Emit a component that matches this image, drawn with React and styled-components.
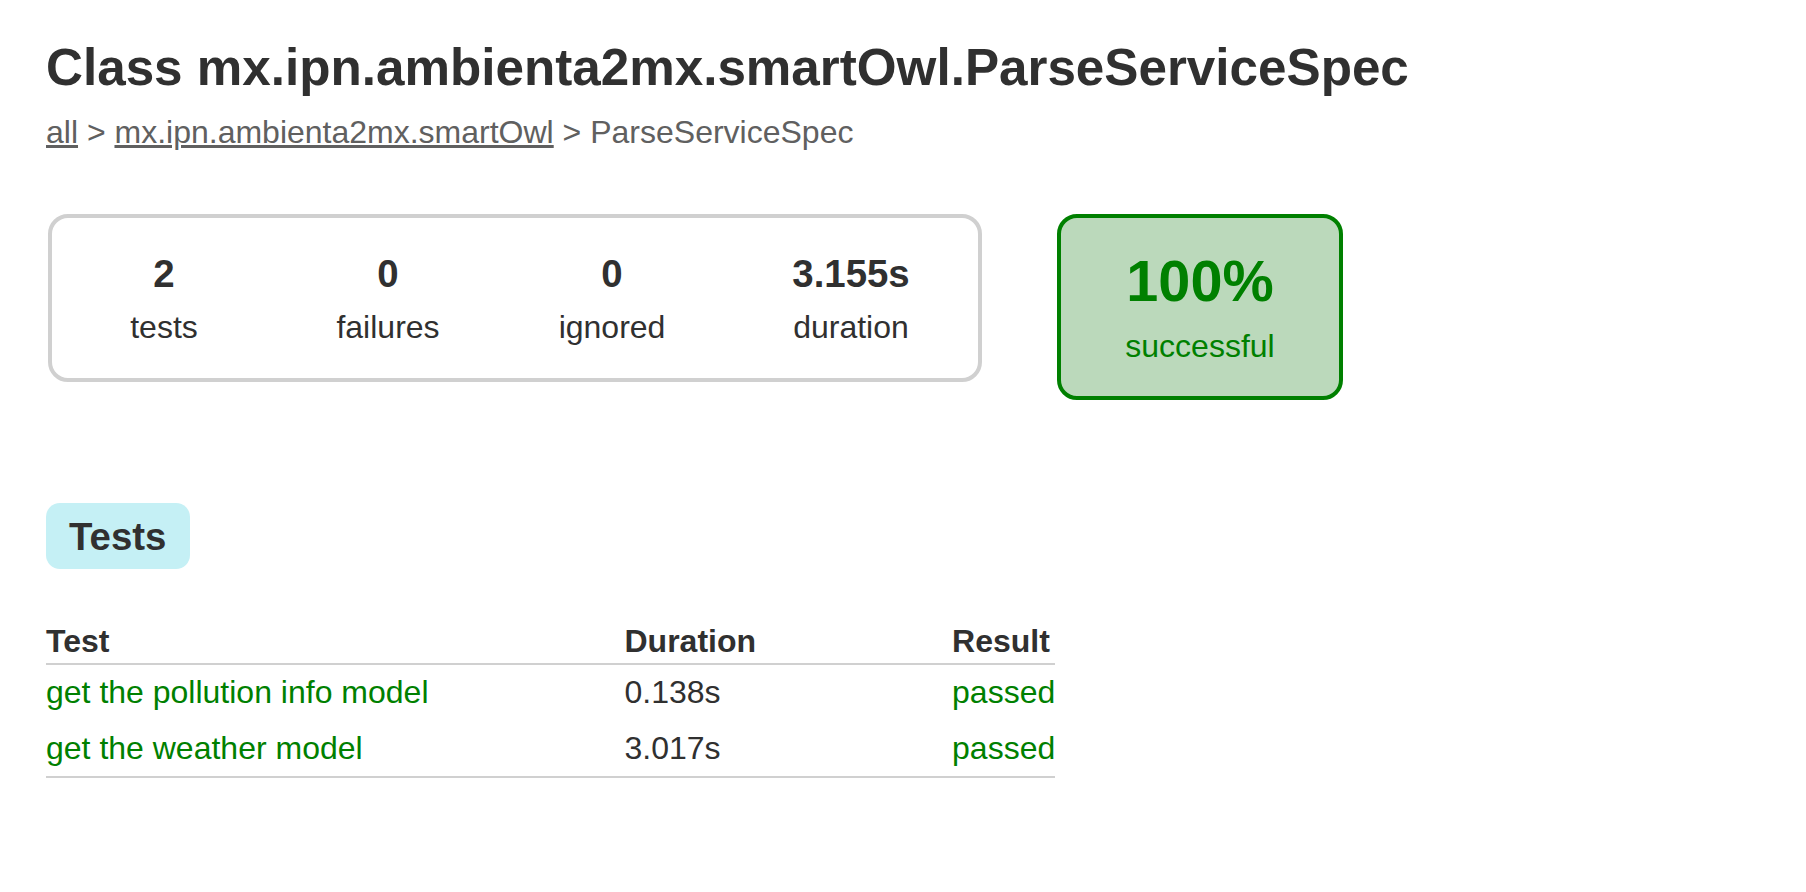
import React from 'react';
import styled, { createGlobalStyle } from 'styled-components';

const GlobalStyle = createGlobalStyle`
    body {
        margin: 0;
        padding: 0;
        background: #ffffff;
        font-family: "Liberation Sans", Helvetica, Arial, sans-serif;
        font-size: 32px;
        color: #303030;
    }
`;

const counters = [
    { value: '2', label: 'tests', width: 224 },
    { value: '0', label: 'failures', width: 224 },
    { value: '0', label: 'ignored', width: 224 },
    { value: '3.155s', label: 'duration', width: 254 },
];

const tests = [
    { name: 'get the pollution info model', duration: '0.138s', result: 'passed' },
    { name: 'get the weather model', duration: '3.017s', result: 'passed' },
];

export default function App() {
    return (
        <Content>
            <GlobalStyle />
            <Title>Class mx.ipn.ambienta2mx.smartOwl.ParseServiceSpec</Title>
            <Breadcrumbs>
                <Crumb href="#">all</Crumb> &gt; <Crumb href="#">mx.ipn.ambienta2mx.smartOwl</Crumb> &gt; ParseServiceSpec
            </Breadcrumbs>

            <Summary>
                <SummaryGroup>
                    {counters.map(c => (
                        <InfoBox key={c.label} width={c.width}>
                            <Counter>{c.value}</Counter>
                            <Label>{c.label}</Label>
                        </InfoBox>
                    ))}
                </SummaryGroup>

                <SuccessRate>
                    <Percent>100%</Percent>
                    <Label>successful</Label>
                </SuccessRate>
            </Summary>

            <TabLinks>
                <Tab>
                    <TabTitle>Tests</TabTitle>
                </Tab>
            </TabLinks>

            <Table>
                <thead>
                    <tr>
                        <Th>Test</Th>
                        <Th>Duration</Th>
                        <Th>Result</Th>
                    </tr>
                </thead>
                <tbody>
                    {tests.map(t => (
                        <tr key={t.name}>
                            <Td success>{t.name}</Td>
                            <Td>{t.duration}</Td>
                            <Td success>{t.result}</Td>
                        </tr>
                    ))}
                </tbody>
            </Table>
        </Content>
    );
}

const Content = styled.div`
    padding: 38px 46px 60px 46px;
`;

const Title = styled.h1`
    font-size: 51.2px;
    font-weight: bold;
    margin: 0 0 17px 0;
    white-space: nowrap;
`;

const Breadcrumbs = styled.div`
    color: #606060;
    white-space: nowrap;
`;

const Crumb = styled.a`
    color: #606060;
    text-decoration: underline;
`;

const Summary = styled.div`
    display: flex;
    align-items: flex-start;
    margin: 63px 0 0 2px;
`;

const SummaryGroup = styled.div`
    display: flex;
    border: solid 4px #d0d0d0;
    border-radius: 20px;
    padding: 34px 0 32px 0;
`;

const InfoBox = styled.div`
    width: ${props => props.width}px;
    text-align: center;
`;

const Counter = styled.p`
    margin: 0 0 13px 0;
    font-size: 38.4px;
    font-weight: bold;
`;

const Label = styled.p`
    margin: 0;
`;

const SuccessRate = styled.div`
    width: 278px;
    margin-left: 75px;
    padding: 30px 0 31px 0;
    text-align: center;
    color: #008000;
    background-color: #bbd9bb;
    border: solid 4px #008000;
    border-radius: 20px;
`;

const Percent = styled.p`
    margin: 0 0 14px 0;
    font-size: 57.6px;
    font-weight: bold;
`;

const TabLinks = styled.div`
    display: flex;
    margin-top: 103px;
`;

const Tab = styled.div`
    background-color: #c5f0f5;
    border-radius: 14px;
    padding: 12px 24px 10px 23px;
`;

const TabTitle = styled.h2`
    margin: 0;
    font-size: 38.4px;
    font-weight: bold;
    white-space: nowrap;
`;

const Table = styled.table`
    margin-top: 54px;
    border-collapse: collapse;
    border-bottom: solid 2px #d0d0d0;
`;

const Th = styled.th`
    text-align: left;
    white-space: nowrap;
    font-weight: bold;
    padding: 0 0 3px 196px;
    border-bottom: solid 2px #d0d0d0;

    &:first-child {
        padding-left: 0;
    }
`;

const Td = styled.td`
    white-space: nowrap;
    padding: 9px 0 9.5px 196px;
    color: ${props => (props.success ? '#008000' : '#303030')};

    &:first-child {
        padding-left: 0;
    }
`;
